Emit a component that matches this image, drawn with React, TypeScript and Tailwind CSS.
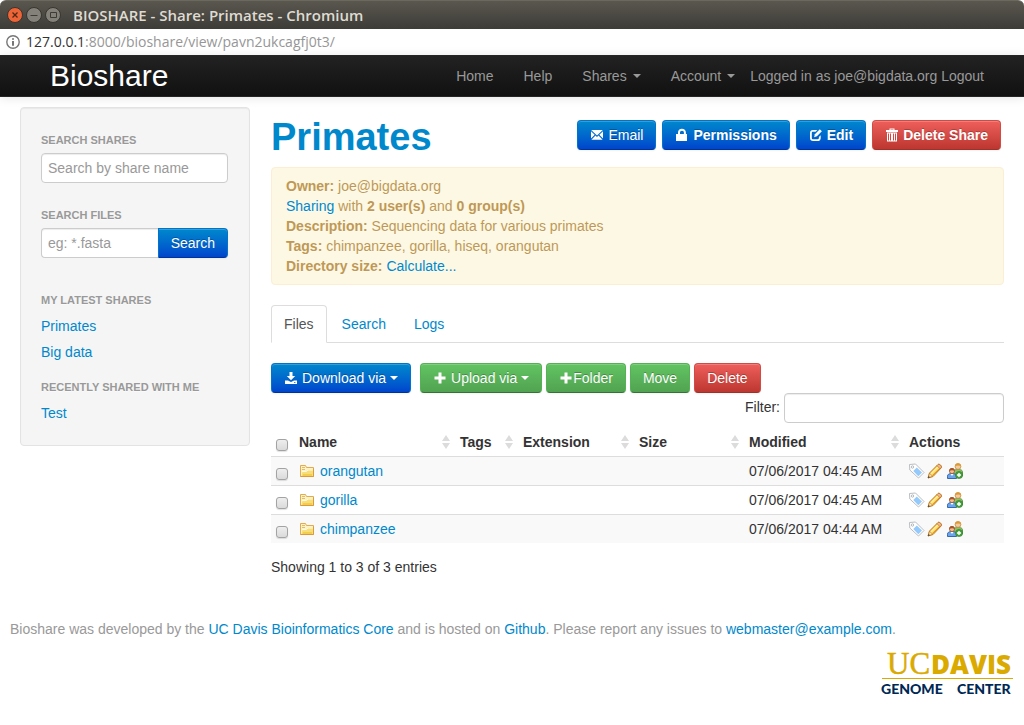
import React from "react";

const primaryBtn =
  "bg-linear-to-b from-[#0088cc] to-[#0044cc] border-[#0074cc] border-b-[#003399]";
const successBtn =
  "bg-linear-to-b from-[#62c462] to-[#51a351] border-[#56b056] border-b-[#387038]";
const dangerBtn =
  "bg-linear-to-b from-[#ee5f5b] to-[#bd362f] border-[#cf4b46] border-b-[#9f302a]";
const btn =
  "flex h-[30px] items-center rounded border px-3 text-sm leading-5 whitespace-nowrap text-white [text-shadow:0_-1px_0_rgba(0,0,0,0.25)] shadow-[inset_0_1px_0_rgba(255,255,255,0.2),0_1px_2px_rgba(0,0,0,0.05)]";
const field =
  "h-[30px] min-w-0 rounded border border-[#cccccc] bg-white px-1.5 text-sm text-[#555555] shadow-[inset_0_1px_1px_rgba(0,0,0,0.075)] outline-none placeholder:text-[#999999]";
const link = "text-[#0088cc]";

function Glyph({ children }: { children: React.ReactNode }) {
  return (
    <svg className="h-3.5 w-3.5 shrink-0" viewBox="0 0 14 14" fill="#fff" aria-hidden="true">
      {children}
    </svg>
  );
}

const EmailIcon = () => (
  <Glyph>
    <path d="M1.200 2h11.600L7 7.400zM1 3.200l3.700 3.600L1 10.600zM13 3.200L9.300 6.800l3.700 3.800zM5.500 7.500L7 8.900l1.500-1.400 4.100 4.300H1.400z" />
  </Glyph>
);
const LockIcon = () => (
  <Glyph>
    <path d="M2 6h1V4.600C3 2.200 4.500.8 6.900.8s4 1.400 4 3.800V6H12v7H1V6zm3 0h3.900V4.600c0-1.200-.7-1.900-1.900-1.900S5 3.400 5 4.600z" />
  </Glyph>
);
const EditIcon = () => (
  <Glyph>
    <path d="M8.300 2H4C2 2 1 3.100 1 5v4.700C1 11.900 2.100 13 4.200 13h4.300c2.200 0 3.200-1.100 3.200-3.100V7.200L9.900 9v1.100c0 .8-.4 1.200-1.200 1.200H4.200c-.9 0-1.400-.4-1.400-1.300V5c0-.8.4-1.200 1.200-1.200h2.600z" />
    <path d="M10.800 1.200l2.100 2.100-5 5-2.800 1 .8-3.100z" />
  </Glyph>
);
const TrashIcon = () => (
  <Glyph>
    <path d="M4.500.5h5V2H13v2H1V2h3.500zM5.500 1.500V2h3v-.5z" fillRule="evenodd" />
    <path
      fillRule="evenodd"
      d="M2 4.500h10V13.500H2zM3 5.500v7h1v-7zM5 5.500v7h1v-7zM8 5.500v7h1v-7zM10 5.500v7h1v-7z"
    />
  </Glyph>
);
const DownloadIcon = () => (
  <Glyph>
    <path d="M5.500 1h3v4h2.700L7 9.300 2.800 5h2.700z" />
    <path fillRule="evenodd" d="M1 9.500h3L7 11l3-1.500h3V13H1zm9 1.700v.8h1.500v-.8z" />
  </Glyph>
);
const PlusIcon = () => (
  <Glyph>
    <path d="M5.500 1.500h3v4h4v3h-4v4h-3v-4h-4v-3h4z" />
  </Glyph>
);

function Caret() {
  return (
    <svg className="h-1 w-2 shrink-0" viewBox="0 0 8 4" fill="currentColor" aria-hidden="true">
      <path d="M0 0h8L4 4z" />
    </svg>
  );
}

function SortIcon() {
  return (
    <svg className="h-3.5 w-2" viewBox="0 0 8 14" fill="#dcdcdc" aria-hidden="true">
      <path d="M4 0l4 6H0zM0 8h8l-4 6z" />
    </svg>
  );
}

function FolderIcon() {
  return (
    <svg className="h-4 w-4 shrink-0" viewBox="0 0 16 16" aria-hidden="true">
      <path d="M1.500 13.500v-11h5l1 2h7v9z" fill="#fdf3c9" stroke="#e3ab4c" />
      <path d="M3 4.500h3M3 6.500h3" stroke="#e6bb62" />
      <path d="M2.500 13l1-5h4l1.500-1.500h5V13z" fill="#f8de78" />
      <path d="M3 8.500h4.500L9 7h5" stroke="#fffbe0" fill="none" />
      <path d="M4 11h9v2H3.500z" fill="#f3cd4c" />
      <path d="M1.500 13.500h13v-8" stroke="#dd9a3c" fill="none" />
    </svg>
  );
}

function TagIcon() {
  return (
    <svg className="h-4 w-4" viewBox="0 0 16 16" aria-hidden="true">
      <path d="M.5 1.500l6-.5 8.500 8.500-5.500 5.500L.8 7z" fill="#fff" stroke="#b9bdc1" />
      <path d="M7.800 4.500l5.200 5-3.700 3.700-5-5.200z" fill="#93c9fb" />
      <circle cx="3.500" cy="4" r="1.200" fill="#fff" stroke="#a5a9ad" strokeWidth=".8" />
    </svg>
  );
}

function PencilIcon() {
  return (
    <svg className="h-4 w-4" viewBox="0 0 16 16" aria-hidden="true">
      <path d="M1 15l1.500-5 8.500-8.500c1.200-1.200 4.500 1.800 3.300 3.300L6 13.500z" fill="#ffd35c" stroke="#b9741a" />
      <path d="M4 11l8-8" stroke="#fff1a0" strokeWidth="1.500" />
      <path d="M5.500 12.500l8-8" stroke="#e59a23" />
      <path d="M11 1.700c1.200-1.200 4.300 1.700 3.200 3l-1.200 1-3-3z" fill="#f2b7a0" stroke="#b9741a" strokeWidth=".7" />
      <path d="M2.500 10.200l3 3-4.300 1.700z" fill="#f9e3bb" stroke="#b9741a" strokeWidth=".6" />
      <path d="M1 15l.6-2 1.400 1.300z" fill="#333" />
    </svg>
  );
}

function GroupAddIcon() {
  return (
    <svg className="h-4 w-4" viewBox="0 0 16 16" aria-hidden="true">
      <path d="M6.500 13V9c0-1.500 1-2.500 4.500-2.500s4.500 1 4.500 2.500v4z" fill="#8fc267" stroke="#5f9a42" />
      <circle cx="11" cy="3.500" r="2.900" fill="#f4c9a0" stroke="#c98b3c" strokeWidth=".8" />
      <path d="M8 3.500C8 1 9.500.3 11 .3s3.200.8 3 3.200C12.500 2.200 10 2 8 3.500z" fill="#dc9a35" />
      <path d="M.5 15.500v-2.300c0-1.700 1.300-2.700 4.500-2.700s4.500 1 4.500 2.700v2.300z" fill="#6aa5ed" stroke="#3468b1" />
      <path d="M3.500 11h3L5 13z" fill="#fff" />
      <circle cx="5" cy="8" r="2.600" fill="#f3bd91" stroke="#9d5528" strokeWidth=".8" />
      <path d="M2.300 8C2.300 6 3.500 5 5 5s2.700 1 2.700 3C6.200 6.900 4 6.800 2.300 8z" fill="#a65428" />
      <circle cx="12" cy="12" r="3.600" fill="#4aa03f" stroke="#2f7d2f" strokeWidth=".6" />
      <path d="M12 10v4M10 12h4" stroke="#fff" strokeWidth="1.400" />
    </svg>
  );
}

function TitleBar() {
  return (
    <div className="flex h-[29px] items-center rounded-t-md border-t border-[#6b685f] bg-linear-to-b from-[#5a574f] to-[#3d3c37] px-[7px]">
      <div className="flex gap-[3px]">
        <button aria-label="Close" className="h-4 w-4 rounded-full">
          <svg viewBox="0 0 16 16" aria-hidden="true">
            <circle cx="8" cy="8" r="7.500" fill="#ee6436" stroke="#37352f" />
            <path d="M5.500 5.500l5 5M10.500 5.500l-5 5" stroke="#4a2a1b" strokeWidth="1.300" />
          </svg>
        </button>
        <button aria-label="Minimize" className="h-4 w-4 rounded-full">
          <svg viewBox="0 0 16 16" aria-hidden="true">
            <circle cx="8" cy="8" r="7.500" fill="#83817a" stroke="#37352f" />
            <path d="M4.500 8.500h7" stroke="#3c3b36" />
          </svg>
        </button>
        <button aria-label="Maximize" className="h-4 w-4 rounded-full">
          <svg viewBox="0 0 16 16" aria-hidden="true">
            <circle cx="8" cy="8" r="7.500" fill="#83817a" stroke="#37352f" />
            <path d="M5.500 5.500h6v5h-6z" fill="none" stroke="#3c3b36" />
          </svg>
        </button>
      </div>
      <div className="ml-3 font-['Open_Sans',sans-serif] text-[15px] font-semibold whitespace-nowrap text-[#dfdbd2]">
        BIOSHARE - Share: Primates - Chromium
      </div>
    </div>
  );
}

function AddressBar() {
  return (
    <div className="flex h-[26px] items-center gap-[6px] bg-white px-1.5 font-['Open_Sans',sans-serif] text-sm text-[#969696]">
      <svg className="h-3.5 w-3.5" viewBox="0 0 14 14" aria-hidden="true">
        <circle cx="7" cy="7" r="6.200" fill="none" stroke="#777" strokeWidth="1.400" />
        <path d="M6.200 3.200h1.600v1.600H6.200zM6.200 6h1.600v4.800H6.200z" fill="#555" />
      </svg>
      <span>
        <span className="text-[#333333]">127.0.0.1</span>:8000/bioshare/view/pavn2ukcagfj0t3/
      </span>
    </div>
  );
}

function NavBar() {
  return (
    <header className="flex h-[42px] items-center justify-between border-y border-[#252525] bg-linear-to-b from-[#222222] to-[#111111] pr-10 pl-[50px] shadow-[0_1px_10px_rgba(0,0,0,0.1)]">
      <a href="#" className="text-3xl leading-10 text-white">
        Bioshare
      </a>
      <nav className="flex items-center text-sm whitespace-nowrap text-[#999999]">
        <a href="#" className="px-[15px]">Home</a>
        <a href="#" className="px-[15px]">Help</a>
        <a href="#" className="flex items-center gap-1.5 px-[15px]">
          Shares <Caret />
        </a>
        <a href="#" className="flex items-center gap-1.5 px-[15px]">
          Account <Caret />
        </a>
        <span>
          Logged in as joe@bigdata.org <a href="#">Logout</a>
        </span>
      </nav>
    </header>
  );
}

const sideHead =
  "block text-[11px] leading-5 font-bold text-[#999999] uppercase [text-shadow:0_1px_0_rgba(255,255,255,0.5)]";

function Sidebar() {
  return (
    <aside className="w-[230px] shrink-0 self-start rounded border border-[#e3e3e3] bg-[#f5f5f5] pt-[22px] pr-[21px] pb-[19px] pl-5 text-sm leading-5 shadow-[inset_0_1px_1px_rgba(0,0,0,0.05)]">
      <label htmlFor="share-search" className={`${sideHead} pb-[3px]`}>
        Search shares
      </label>
      <input id="share-search" className={`${field} w-full`} placeholder="Search by share name" />
      <label htmlFor="file-search" className={`${sideHead} pt-[22px] pb-[3px]`}>
        Search files
      </label>
      <div className="flex">
        <input id="file-search" className={`${field} flex-1 rounded-r-none border-r-0`} placeholder="eg: *.fasta" />
        <button className={`${btn} ${primaryBtn} rounded-l-none`}>Search</button>
      </div>
      <h2 className={`${sideHead} mt-8 pb-[3px]`}>My latest shares</h2>
      <a href="#" className={`${link} block py-[3px]`}>Primates</a>
      <a href="#" className={`${link} block py-[3px]`}>Big data</a>
      <h2 className={`${sideHead} mt-3 pb-[3px]`}>Recently shared with me</h2>
      <a href="#" className={`${link} block py-[3px]`}>Test</a>
    </aside>
  );
}

function Summary() {
  return (
    <div className="rounded border border-[#fbeed5] bg-[#fcf8e3] px-3.5 py-2 text-sm leading-5 text-[#c09853] [text-shadow:0_1px_0_rgba(255,255,255,0.5)]">
      <p><b>Owner:</b> joe@bigdata.org</p>
      <p>
        <a href="#" className={link}>Sharing</a> with <b>2 user(s)</b> and <b>0 group(s)</b>
      </p>
      <p><b>Description:</b> Sequencing data for various primates</p>
      <p><b>Tags:</b> chimpanzee, gorilla, hiseq, orangutan</p>
      <p>
        <b>Directory size:</b> <a href="#" className={link}>Calculate...</a>
      </p>
    </div>
  );
}

const files = [
  { name: "orangutan", modified: "07/06/2017 04:45 AM" },
  { name: "gorilla", modified: "07/06/2017 04:45 AM" },
  { name: "chimpanzee", modified: "07/06/2017 04:44 AM" },
];

const columns = [
  { label: "Name", width: "w-[161px]" },
  { label: "Tags", width: "w-[63px]" },
  { label: "Extension", width: "w-[116px]" },
  { label: "Size", width: "w-[110px]" },
  { label: "Modified", width: "w-[160px]" },
];

function RowCheckbox({ label }: { label: string }) {
  return (
    <input
      type="checkbox"
      aria-label={label}
      className="mt-[7px] ml-px block h-3 w-3 appearance-none rounded-[3px] border border-[#a3a3a3] bg-linear-to-b from-[#eeeeee] to-[#dadada] shadow-[0_1px_1px_rgba(0,0,0,0.12)] checked:from-[#0088cc] checked:to-[#0044cc]"
    />
  );
}

function FileTable() {
  return (
    <table className="mt-[5px] w-full table-fixed border-collapse text-left text-sm leading-5">
      <thead>
        <tr>
          <th className="w-6 p-1 align-top">
            <RowCheckbox label="Select all" />
          </th>
          {columns.map((c) => (
            <th key={c.label} className={`${c.width} p-1 align-top`}>
              <div className="flex items-center justify-between pr-0.5">
                {c.label}
                <SortIcon />
              </div>
            </th>
          ))}
          <th className="p-1 align-top">Actions</th>
        </tr>
      </thead>
      <tbody>
        {files.map((f) => (
          <tr key={f.name} className="border-t border-[#dddddd] odd:bg-[#f9f9f9]">
            <td className="p-1 align-top">
              <RowCheckbox label={`Select ${f.name}`} />
            </td>
            <td className="p-1">
              <a href="#" className={`${link} flex items-center gap-[5px]`}>
                <FolderIcon />
                {f.name}
              </a>
            </td>
            <td />
            <td />
            <td />
            <td className="p-1 whitespace-nowrap">{f.modified}</td>
            <td className="p-1">
              <div className="flex h-5 items-center gap-0.5">
                <button aria-label="Tag"><TagIcon /></button>
                <button aria-label="Rename"><PencilIcon /></button>
                <button aria-label="Share" className="ml-0.5"><GroupAddIcon /></button>
              </div>
            </td>
          </tr>
        ))}
      </tbody>
    </table>
  );
}

function Logo() {
  return (
    <svg className="h-[54px] w-[134px]" viewBox="0 -7 134 54" role="img" aria-label="UC Davis Genome Center">
      <text x="7" y="22" fill="#daaa00" stroke="#daaa00" strokeWidth=".5" fontFamily="Liberation Serif, serif" fontSize="31">UC</text>
      <text x="51" y="22" fill="#daaa00" fontFamily="Open Sans, sans-serif" fontWeight="800" fontSize="26">DAVIS</text>
      <path d="M2 26.500h131" stroke="#daaa00" />
      <text x="1" y="42" fill="#002855" fontFamily="Lato, sans-serif" fontWeight="900" fontSize="14">GENOME</text>
      <text x="77" y="42" fill="#002855" fontFamily="Lato, sans-serif" fontWeight="900" fontSize="14">CENTER</text>
    </svg>
  );
}

export default function App() {
  return (
    <div className="bg-white font-['Liberation_Sans',Arial,sans-serif] text-sm leading-5 text-[#333333]">
      <TitleBar />
      <AddressBar />
      <NavBar />
      <div className="flex gap-[21px] px-5 pt-2.5">
        <Sidebar />
        <main className="min-w-0 flex-1 pt-2.5">
          <div className="mb-2.5 flex items-start justify-between pr-[3px]">
            <h1 className="text-[38px] leading-10 font-bold text-[#0088cc]">Primates</h1>
            <div className="mt-[3px] flex gap-1.5">
              <button className={`${btn} ${primaryBtn} gap-1`}><EmailIcon />Email</button>
              <button className={`${btn} ${primaryBtn} gap-1 font-bold`}><LockIcon />Permissions</button>
              <button className={`${btn} ${primaryBtn} gap-1 font-bold`}><EditIcon />Edit</button>
              <button className={`${btn} ${dangerBtn} gap-1 font-bold`}><TrashIcon />Delete Share</button>
            </div>
          </div>
          <Summary />
          <div className="mt-5 flex gap-0.5 border-b border-[#dddddd]">
            <a href="#" className="-mb-px rounded-t border border-[#dddddd] border-b-white bg-white px-3 py-2 text-[#555555]">Files</a>
            <a href="#" className={`${link} px-[13px] pt-[9px] pb-2`}>Search</a>
            <a href="#" className={`${link} px-[13px] pt-[9px] pb-2`}>Logs</a>
          </div>
          <div className="mt-5 flex gap-1">
            <button className={`${btn} ${primaryBtn} mr-[5px] gap-1`}><DownloadIcon />Download via<Caret /></button>
            <button className={`${btn} ${successBtn} gap-1`}><PlusIcon />Upload via<Caret /></button>
            <button className={`${btn} ${successBtn}`}><PlusIcon />Folder</button>
            <button className={`${btn} ${successBtn}`}>Move</button>
            <button className={`${btn} ${dangerBtn}`}>Delete</button>
          </div>
          <div className="flex justify-end gap-1">
            <label htmlFor="filter" className="pt-1">Filter:</label>
            <input id="filter" className={`${field} w-[220px]`} />
          </div>
          <FileTable />
          <p className="mt-[14px]">Showing 1 to 3 of 3 entries</p>
        </main>
      </div>
      <footer className="px-2.5 pt-[42px] text-[#999999]">
        <p>
          Bioshare was developed by the <a href="#" className={link}>UC Davis Bioinformatics Core</a> and is hosted on{" "}
          <a href="#" className={link}>Github</a>. Please report any issues to{" "}
          <a href="#" className={link}>webmaster@example.com</a>.
        </p>
        <div className="mt-[6px] flex justify-end">
          <Logo />
        </div>
      </footer>
    </div>
  );
}
